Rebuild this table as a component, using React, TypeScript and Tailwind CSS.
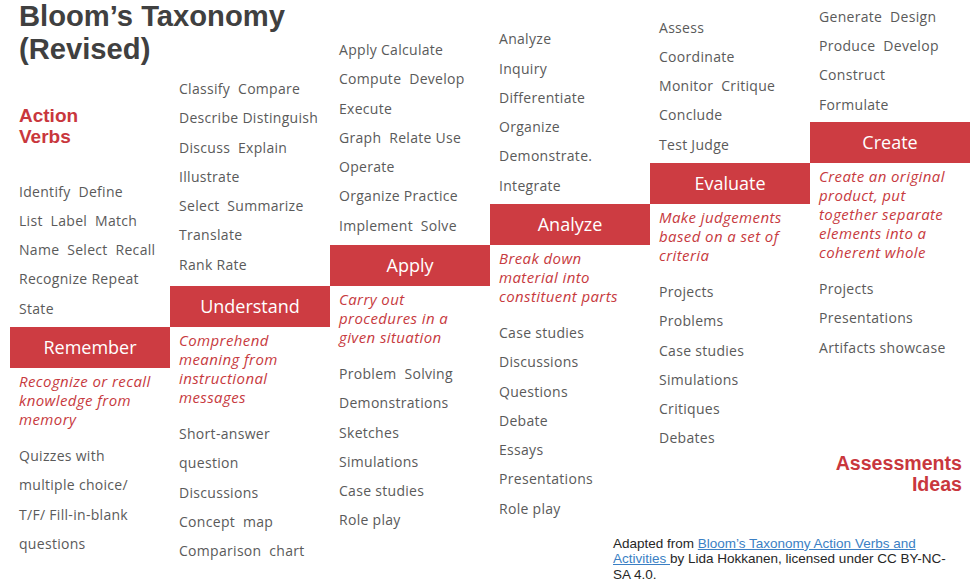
import React from 'react';

type Level = {
    name: string;
    verbs: string[];
    description: string[];
    assessments: string[];
    topHeight: string;
};

const levels: Level[] = [
    {
        name: "Remember",
        verbs: ["Identify  Define", "List  Label  Match", "Name  Select  Recall", "Recognize Repeat", "State"],
        description: ["Recognize or recall", "knowledge from", "memory"],
        assessments: ["Quizzes with", "multiple choice/", "T/F/ Fill-in-blank", "questions"],
        topHeight: "h-[327px] pb-[4px]"
    },
    {
        name: "Understand",
        verbs: ["Classify  Compare", "Describe Distinguish", "Discuss  Explain", "Illustrate", "Select  Summarize", "Translate", "Rank Rate"],
        description: ["Comprehend", "meaning from", "instructional", "messages"],
        assessments: ["Short-answer", "question", "Discussions", "Concept  map", "Comparison  chart"],
        topHeight: "h-[286px] pb-[7px]"
    },
    {
        name: "Apply",
        verbs: ["Apply Calculate", "Compute  Develop", "Execute", "Graph  Relate Use", "Operate", "Organize Practice", "Implement  Solve"],
        description: ["Carry out", "procedures in a", "given situation"],
        assessments: ["Problem  Solving", "Demonstrations", "Sketches", "Simulations", "Case studies", "Role play"],
        topHeight: "h-[245px] pb-[5px]"
    },
    {
        name: "Analyze",
        verbs: ["Analyze", "Inquiry", "Differentiate", "Organize", "Demonstrate.", "Integrate"],
        description: ["Break down", "material into", "constituent parts"],
        assessments: ["Case studies", "Discussions", "Questions", "Debate", "Essays", "Presentations", "Role play"],
        topHeight: "h-[204px] pb-[4px]"
    },
    {
        name: "Evaluate",
        verbs: ["Assess", "Coordinate", "Monitor  Critique", "Conclude", "Test Judge"],
        description: ["Make judgements", "based on a set of", "criteria"],
        assessments: ["Projects", "Problems", "Case studies", "Simulations", "Critiques", "Debates"],
        topHeight: "h-[163px] pb-[4px]"
    },
    {
        name: "Create",
        verbs: ["Generate  Design", "Produce  Develop", "Construct", "Formulate"],
        description: ["Create an original", "product, put", "together separate", "elements into a", "coherent whole"],
        assessments: ["Projects", "Presentations", "Artifacts showcase"],
        topHeight: "h-[122px] pb-[3px]"
    }
];

const bodyFont = { fontFamily: '"Open Sans", "Noto Sans", sans-serif' };
const headFont = { fontFamily: '"Liberation Sans", Arial, sans-serif' };

const App = () => {
    return (
        <div className="w-[980px] h-[587px] bg-white overflow-hidden pl-[10px]" style={bodyFont}>
            <div className="grid grid-cols-[repeat(6,160px)]">
                {levels.map((level, i) => (
                    <div key={level.name} className="flex flex-col">
                        {/** Verbs sit on top of the step */}
                        <div className={`${level.topHeight} flex flex-col px-[9px]`}>
                            {i === 0 && (
                                <div className="whitespace-nowrap" style={headFont}>
                                    <p className="text-[29.2px] leading-[33px] font-bold text-[#404040]">Bloom’s Taxonomy</p>
                                    <p className="text-[29.2px] leading-[33px] font-bold text-[#404040]">(Revised)</p>
                                    <p className="mt-[39px] text-[19px] leading-[21px] font-bold text-[#c9373d]">Action</p>
                                    <p className="text-[19px] leading-[21px] font-bold text-[#c9373d]">Verbs</p>
                                </div>
                            )}
                            <div className="mt-auto">
                                {level.verbs.map(v => (
                                    <p key={v} className="whitespace-pre text-[14px] leading-[29.3px] tracking-[0.3px] text-[#5a5a5a]">{v}</p>
                                ))}
                            </div>
                        </div>

                        <div className="h-[41px] bg-[#cd3c42] flex items-center justify-center text-white text-[18px]">
                            {level.name}
                        </div>

                        <div className="px-[9px] pt-[4px]">
                            {level.description.map(d => (
                                <p key={d} className="whitespace-nowrap italic text-[15px] leading-[19px] tracking-[0.4px] text-[#c73a40]">{d}</p>
                            ))}
                        </div>

                        <div className="px-[9px] mt-3">
                            {level.assessments.map(a => (
                                <p key={a} className="whitespace-pre text-[14px] leading-[29.3px] tracking-[0.3px] text-[#5a5a5a]">{a}</p>
                            ))}
                        </div>

                        {i === 5 && (
                            <div className="mt-[91px]" style={headFont}>
                                <p className="pr-[8px] text-right text-[19.6px] leading-[21px] font-bold text-[#c9373d]">Assessments</p>
                                <p className="pr-[8px] text-right text-[19.6px] leading-[21px] font-bold text-[#c9373d]">Ideas</p>
                                <p className="mt-[41px] ml-[-197px] whitespace-nowrap text-[13.5px] leading-[15.5px] text-[#262626]">
                                    Adapted from <a href="#" className="text-[#3b7fc4] underline">Bloom’s Taxonomy Action Verbs and</a>
                                    <br />
                                    <a href="#" className="text-[#3b7fc4] underline">Activities </a> by Lida Hokkanen, licensed under CC BY-NC-
                                    <br />
                                    SA 4.0.
                                </p>
                            </div>
                        )}
                    </div>
                ))}
            </div>
        </div>
    );
}

export default App;
